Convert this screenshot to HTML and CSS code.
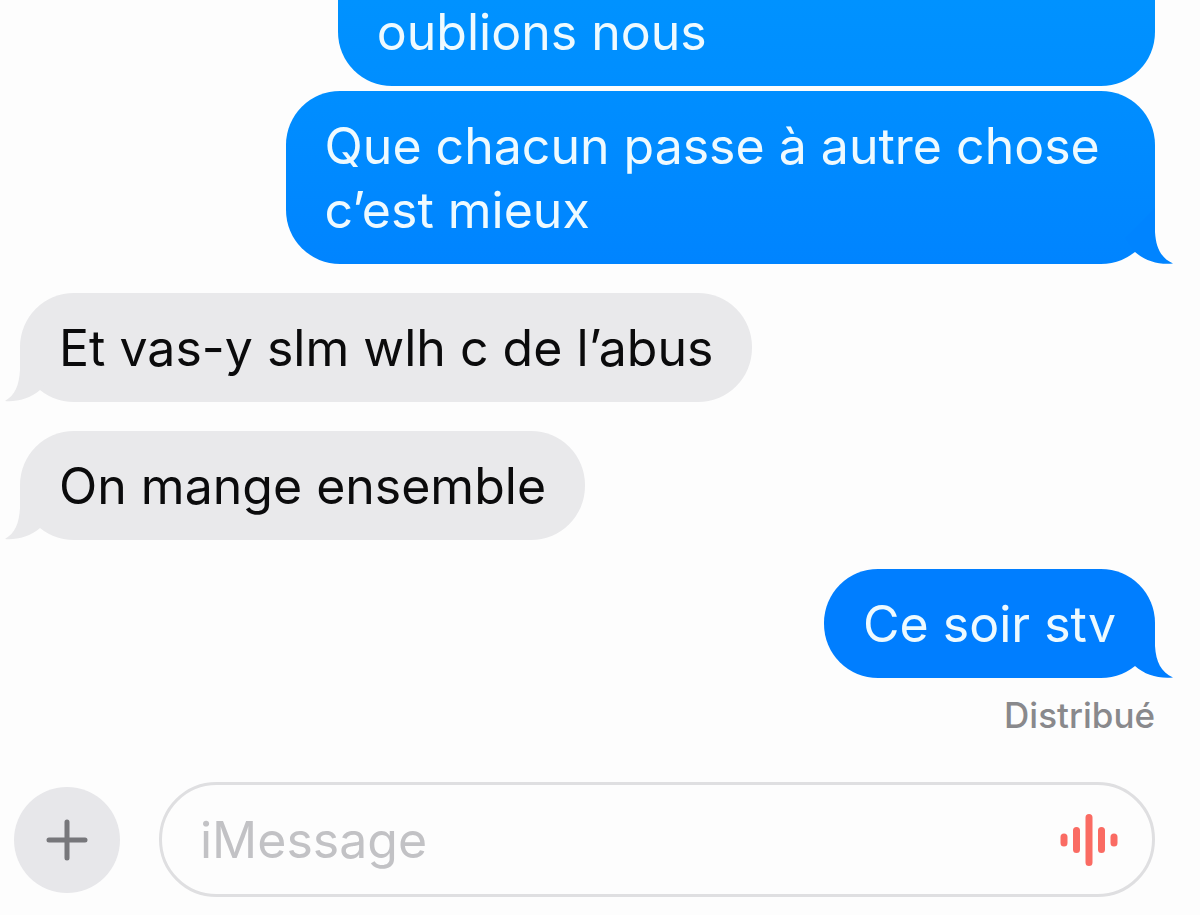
FILE: index.html
```html
<!DOCTYPE html>
<html lang="fr">
<head>
    <meta charset="UTF-8">
    <meta name="viewport" content="width=device-width, initial-scale=1.0">
    <title>iMessage</title>
    <link rel="stylesheet" href="styles.css">
</head>
<body>
    <main class="thread">
        <div class="bubble sent sent-first">oublions nous</div>

        <div class="bubble sent sent-second">
            Que chacun passe à autre chose c’est mieux
            <svg class="tail" viewBox="0 0 50 56" aria-hidden="true">
                <path d="M30 0V24C31 40 36 50 48 55.500C34 57 20 53 10 44L0 30Z"/>
            </svg>
        </div>

        <div class="bubble received">
            Et vas-y slm wlh c de l’abus
            <svg class="tail" viewBox="0 0 50 56" aria-hidden="true">
                <path d="M30 0V24C31 40 35 49 45 55C34 56 20 53 10 44L0 30Z"/>
            </svg>
        </div>

        <div class="bubble received">
            On mange ensemble
            <svg class="tail" viewBox="0 0 50 56" aria-hidden="true">
                <path d="M30 0V24C31 40 35 49 45 55C34 56 20 53 10 44L0 30Z"/>
            </svg>
        </div>

        <div class="bubble sent sent-last">
            Ce soir stv
            <svg class="tail" viewBox="0 0 50 56" aria-hidden="true">
                <path d="M30 0V24C31 40 36 50 48 55.500C34 57 20 53 10 44L0 30Z"/>
            </svg>
        </div>

        <p class="status">Distribué</p>
    </main>

    <form class="composer">
        <button class="add-btn" type="button" aria-label="Ajouter">
            <svg width="42" height="42" viewBox="0 0 42 42" aria-hidden="true">
                <path d="M21 3V39M3 21H39"/>
            </svg>
        </button>
        <div class="field">
            <input class="field-input" type="text" placeholder="iMessage" aria-label="iMessage">
            <button class="audio-btn" type="button" aria-label="Message audio">
                <svg width="60" height="52" viewBox="0 0 60 52" aria-hidden="true">
                    <path d="M5 23V29M17.500 16.500V35.500M30 3.500V48.500M42.500 16.500V35.500M55 23V29"/>
                </svg>
            </button>
        </div>
    </form>
</body>
</html>
```
FILE: styles.css
```css
* {
    margin: 0;
    padding: 0;
    box-sizing: border-box;
}

body {
    background-color: #fdfdfd;
    color: #0b0b0c;
    font-family: Inter, "Liberation Sans", sans-serif;
    overflow-x: hidden;
}

.thread {
    display: flex;
    flex-direction: column;
    padding: 0 45px 0 20px;
}

.bubble {
    position: relative;
    max-width: 76.6%;
    margin-bottom: 29px;
    padding: 23px 39px 22px;
    border-radius: 54px;
    font-size: 50px;
    line-height: 64px;
}

.sent {
    align-self: flex-end;
    color: #eefaff;
}

.received {
    align-self: flex-start;
    background-color: #e9e9eb;
}

/* Upper lines of this message are scrolled out of view */
.sent-first {
    width: 72%;
    margin-bottom: 5px;
    padding-top: 0;
    border-radius: 0 0 54px 54px;
    background: linear-gradient(#0092ff, #008eff);
}

.sent-second {
    background: linear-gradient(#008eff, #0084ff);
}

.sent-last {
    margin-bottom: 15px;
    background-color: #007eff;
}

.tail {
    position: absolute;
    right: -20px;
    bottom: 0;
    width: 50px;
    height: 56px;
    fill: #0084ff;
}

.sent-last .tail {
    fill: #007eff;
}

.received .tail {
    right: auto;
    left: -20px;
    fill: #e9e9eb;
    transform: scaleX(-1);
}

.status {
    align-self: flex-end;
    color: #89898c;
    font-size: 35px;
    font-weight: 500;
    line-height: 44px;
}

.composer {
    display: flex;
    align-items: center;
    gap: 39px;
    padding: 45px 45px 17px 14px;
}

.add-btn {
    display: flex;
    flex: none;
    align-items: center;
    justify-content: center;
    width: 106px;
    height: 106px;
    border: none;
    border-radius: 50%;
    background-color: #e7e7ea;
    cursor: pointer;
}

.add-btn svg {
    fill: none;
    stroke: #77777b;
    stroke-width: 5;
    stroke-linecap: round;
}

.field {
    display: flex;
    flex: 1;
    align-items: center;
    height: 115px;
    padding: 0 33px 0 38px;
    border: 3px solid #dfdfe1;
    border-radius: 58px;
}

.field-input {
    flex: 1;
    min-width: 0;
    border: none;
    outline: none;
    background: none;
    color: #0b0b0c;
    font: inherit;
    font-size: 50px;
}

.field-input::placeholder {
    color: #c2c2c5;
    opacity: 1;
}

.audio-btn {
    display: flex;
    border: none;
    background: none;
    cursor: pointer;
}

.audio-btn svg {
    fill: none;
    stroke: #fa6b63;
    stroke-width: 7;
    stroke-linecap: round;
}
```
